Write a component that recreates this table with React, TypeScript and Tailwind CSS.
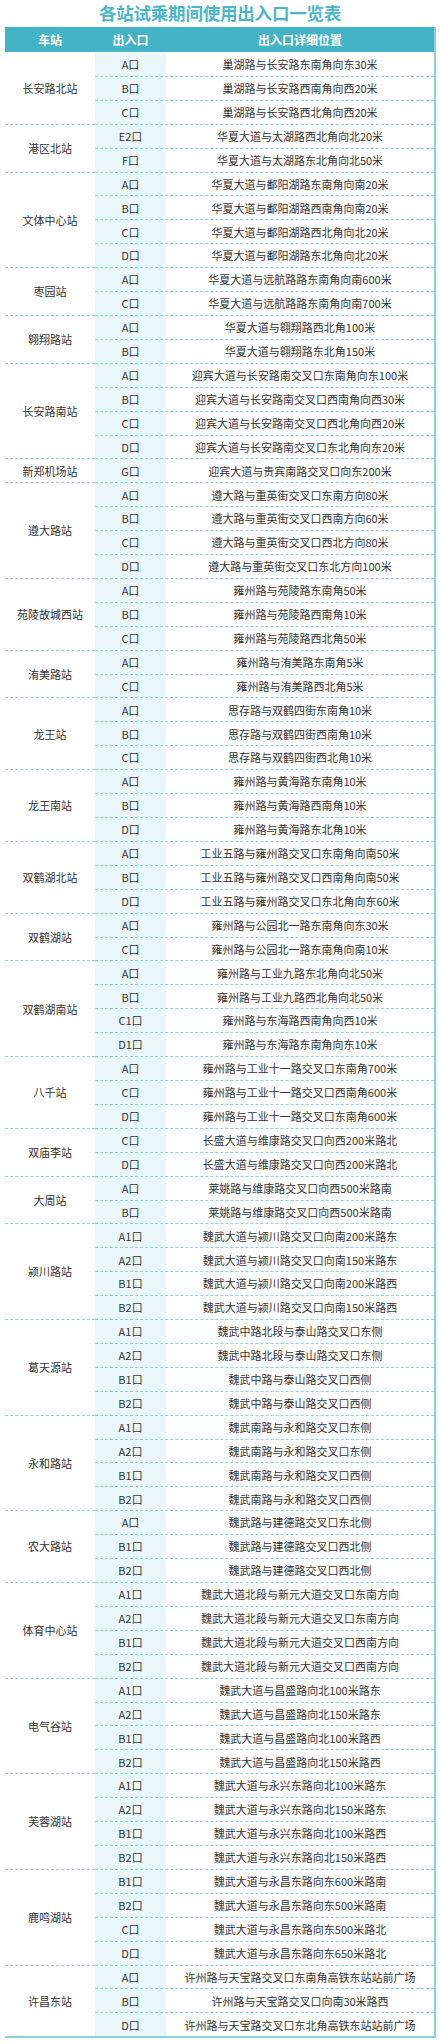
import React from 'react'

type Exit = [string, string]
type Station = { name: string; exits: Exit[] }

const stations: Station[] = [
  { name: '长安路北站', exits: [['A口', '巢湖路与长安路东南角向东30米'], ['B口', '巢湖路与长安路西南角向西20米'], ['C口', '巢湖路与长安路西北角向西20米']] },
  { name: '港区北站', exits: [['E2口', '华夏大道与太湖路西北角向北20米'], ['F口', '华夏大道与太湖路东北角向北50米']] },
  { name: '文体中心站', exits: [['A口', '华夏大道与鄱阳湖路东南角向南20米'], ['B口', '华夏大道与鄱阳湖路西南角向南20米'], ['C口', '华夏大道与鄱阳湖路西北角向北20米'], ['D口', '华夏大道与鄱阳湖路东北角向北20米']] },
  { name: '枣园站', exits: [['A口', '华夏大道与远航路路东南角向南600米'], ['C口', '华夏大道与远航路路东南角向南700米']] },
  { name: '翱翔路站', exits: [['A口', '华夏大道与翱翔路西北角100米'], ['B口', '华夏大道与翱翔路东北角150米']] },
  { name: '长安路南站', exits: [['A口', '迎宾大道与长安路南交叉口东南角向东100米'], ['B口', '迎宾大道与长安路南交叉口西南角向西30米'], ['C口', '迎宾大道与长安路南交叉口西北角向西20米'], ['D口', '迎宾大道与长安路南交叉口东北角向东20米']] },
  { name: '新郑机场站', exits: [['G口', '迎宾大道与贵宾南路交叉口向东200米']] },
  { name: '遵大路站', exits: [['A口', '遵大路与重英街交叉口东南方向80米'], ['B口', '遵大路与重英街交叉口西南方向60米'], ['C口', '遵大路与重英街交叉口西北方向80米'], ['D口', '遵大路与重英街交叉口东北方向100米']] },
  { name: '苑陵故城西站', exits: [['A口', '雍州路与苑陵路东南角50米'], ['B口', '雍州路与苑陵路西南角10米'], ['C口', '雍州路与苑陵路西北角50米']] },
  { name: '洧美路站', exits: [['A口', '雍州路与洧美路东南角5米'], ['C口', '雍州路与洧美路西北角5米']] },
  { name: '龙王站', exits: [['A口', '思存路与双鹤四街东南角10米'], ['B口', '思存路与双鹤四街西南角10米'], ['C口', '思存路与双鹤四街西北角10米']] },
  { name: '龙王南站', exits: [['A口', '雍州路与黄海路东南角10米'], ['B口', '雍州路与黄海路西南角10米'], ['D口', '雍州路与黄海路东北角10米']] },
  { name: '双鹤湖北站', exits: [['A口', '工业五路与雍州路交叉口东南角向南50米'], ['B口', '工业五路与雍州路交叉口西南角向南50米'], ['D口', '工业五路与雍州路交叉口东北角向东60米']] },
  { name: '双鹤湖站', exits: [['A口', '雍州路与公园北一路东南角向东30米'], ['C口', '雍州路与公园北一路东南角向南10米']] },
  { name: '双鹤湖南站', exits: [['A口', '雍州路与工业九路东北角向北50米'], ['B口', '雍州路与工业九路西北角向北50米'], ['C1口', '雍州路与东海路西南角向西10米'], ['D1口', '雍州路与东海路东南角向东10米']] },
  { name: '八千站', exits: [['A口', '雍州路与工业十一路交叉口东南角700米'], ['C口', '雍州路与工业十一路交叉口西南角600米'], ['D口', '雍州路与工业十一路交叉口东南角600米']] },
  { name: '双庙李站', exits: [['C口', '长盛大道与维康路交叉口向西200米路北'], ['D口', '长盛大道与维康路交叉口向西200米路北']] },
  { name: '大周站', exits: [['A口', '莱姚路与维康路交叉口向西500米路南'], ['B口', '莱姚路与维康路交叉口向西500米路南']] },
  { name: '颍川路站', exits: [['A1口', '魏武大道与颍川路交叉口向南200米路东'], ['A2口', '魏武大道与颍川路交叉口向南150米路东'], ['B1口', '魏武大道与颍川路交叉口向南200米路西'], ['B2口', '魏武大道与颍川路交叉口向南150米路西']] },
  { name: '葛天源站', exits: [['A1口', '魏武中路北段与泰山路交叉口东侧'], ['A2口', '魏武中路北段与泰山路交叉口东侧'], ['B1口', '魏武中路与泰山路交叉口西侧'], ['B2口', '魏武中路与泰山路交叉口西侧']] },
  { name: '永和路站', exits: [['A1口', '魏武南路与永和路交叉口东侧'], ['A2口', '魏武南路与永和路交叉口东侧'], ['B1口', '魏武南路与永和路交叉口西侧'], ['B2口', '魏武南路与永和路交叉口西侧']] },
  { name: '农大路站', exits: [['A口', '魏武路与建德路交叉口东北侧'], ['B1口', '魏武路与建德路交叉口西北侧'], ['B2口', '魏武路与建德路交叉口西北侧']] },
  { name: '体育中心站', exits: [['A1口', '魏武大道北段与新元大道交叉口东南方向'], ['A2口', '魏武大道北段与新元大道交叉口东南方向'], ['B1口', '魏武大道北段与新元大道交叉口西南方向'], ['B2口', '魏武大道北段与新元大道交叉口西南方向']] },
  { name: '电气谷站', exits: [['A1口', '魏武大道与昌盛路向北100米路东'], ['A2口', '魏武大道与昌盛路向北150米路东'], ['B1口', '魏武大道与昌盛路向北100米路西'], ['B2口', '魏武大道与昌盛路向北150米路西']] },
  { name: '芙蓉湖站', exits: [['A1口', '魏武大道与永兴东路向北100米路东'], ['A2口', '魏武大道与永兴东路向北150米路东'], ['B1口', '魏武大道与永兴东路向北100米路西'], ['B2口', '魏武大道与永兴东路向北150米路西']] },
  { name: '鹿鸣湖站', exits: [['B1口', '魏武大道与永昌东路向东600米路南'], ['B2口', '魏武大道与永昌东路向东500米路南'], ['C口', '魏武大道与永昌东路向东500米路北'], ['D口', '魏武大道与永昌东路向东650米路北']] },
  { name: '许昌东站', exits: [['A口', '许州路与天宝路交叉口东南角高铁东站站前广场'], ['B口', '许州路与天宝路交叉口向南30米路西'], ['D口', '许州路与天宝路交叉口东北角高铁东站站前广场']] },
]

export default function App() {
  return (
    <div className="w-[440px] bg-white text-[#333333] font-['Noto_Sans_CJK_SC',sans-serif]">
      <div className="h-[27px] flex items-center justify-center text-[17.5px] font-bold text-[#4ab7c9] tracking-[-0.2px]">
        各站试乘期间使用出入口一览表
      </div>

      <div className="ml-[5px] w-[431px] border-r-2 border-b-2 border-[#88d2df]">
        <div className="h-[25px] flex bg-[#45b3c6] text-white text-[12px] font-bold">
          <div className="w-[90px] flex items-center justify-center">车站</div>
          <div className="w-[71px] flex items-center justify-center">出入口</div>
          <div className="flex-1 flex items-center justify-center">出入口详细位置</div>
        </div>

        {stations.map((st, gi) => (
          <div key={st.name} className="flex text-[11px]">
            <div
              className={
                'w-[90px] flex items-center justify-center border-t border-dashed ' +
                (gi === 0 ? 'border-transparent' : 'border-[#8fd2de]')
              }
            >
              {st.name}
            </div>
            <div className="flex-1 flex flex-col">
              {st.exits.map(([exit, detail], ri) => (
                <div
                  key={exit + ri}
                  className={
                    'h-[23.92px] flex border-t border-dashed ' +
                    (gi === 0 && ri === 0 ? 'border-transparent' : 'border-[#8fd2de]')
                  }
                >
                  <div className="w-[71px] flex items-center justify-center bg-[#eaf7fa]">{exit}</div>
                  <div className="flex-1 flex items-center justify-center">{detail}</div>
                </div>
              ))}
            </div>
          </div>
        ))}
      </div>
    </div>
  )
}
